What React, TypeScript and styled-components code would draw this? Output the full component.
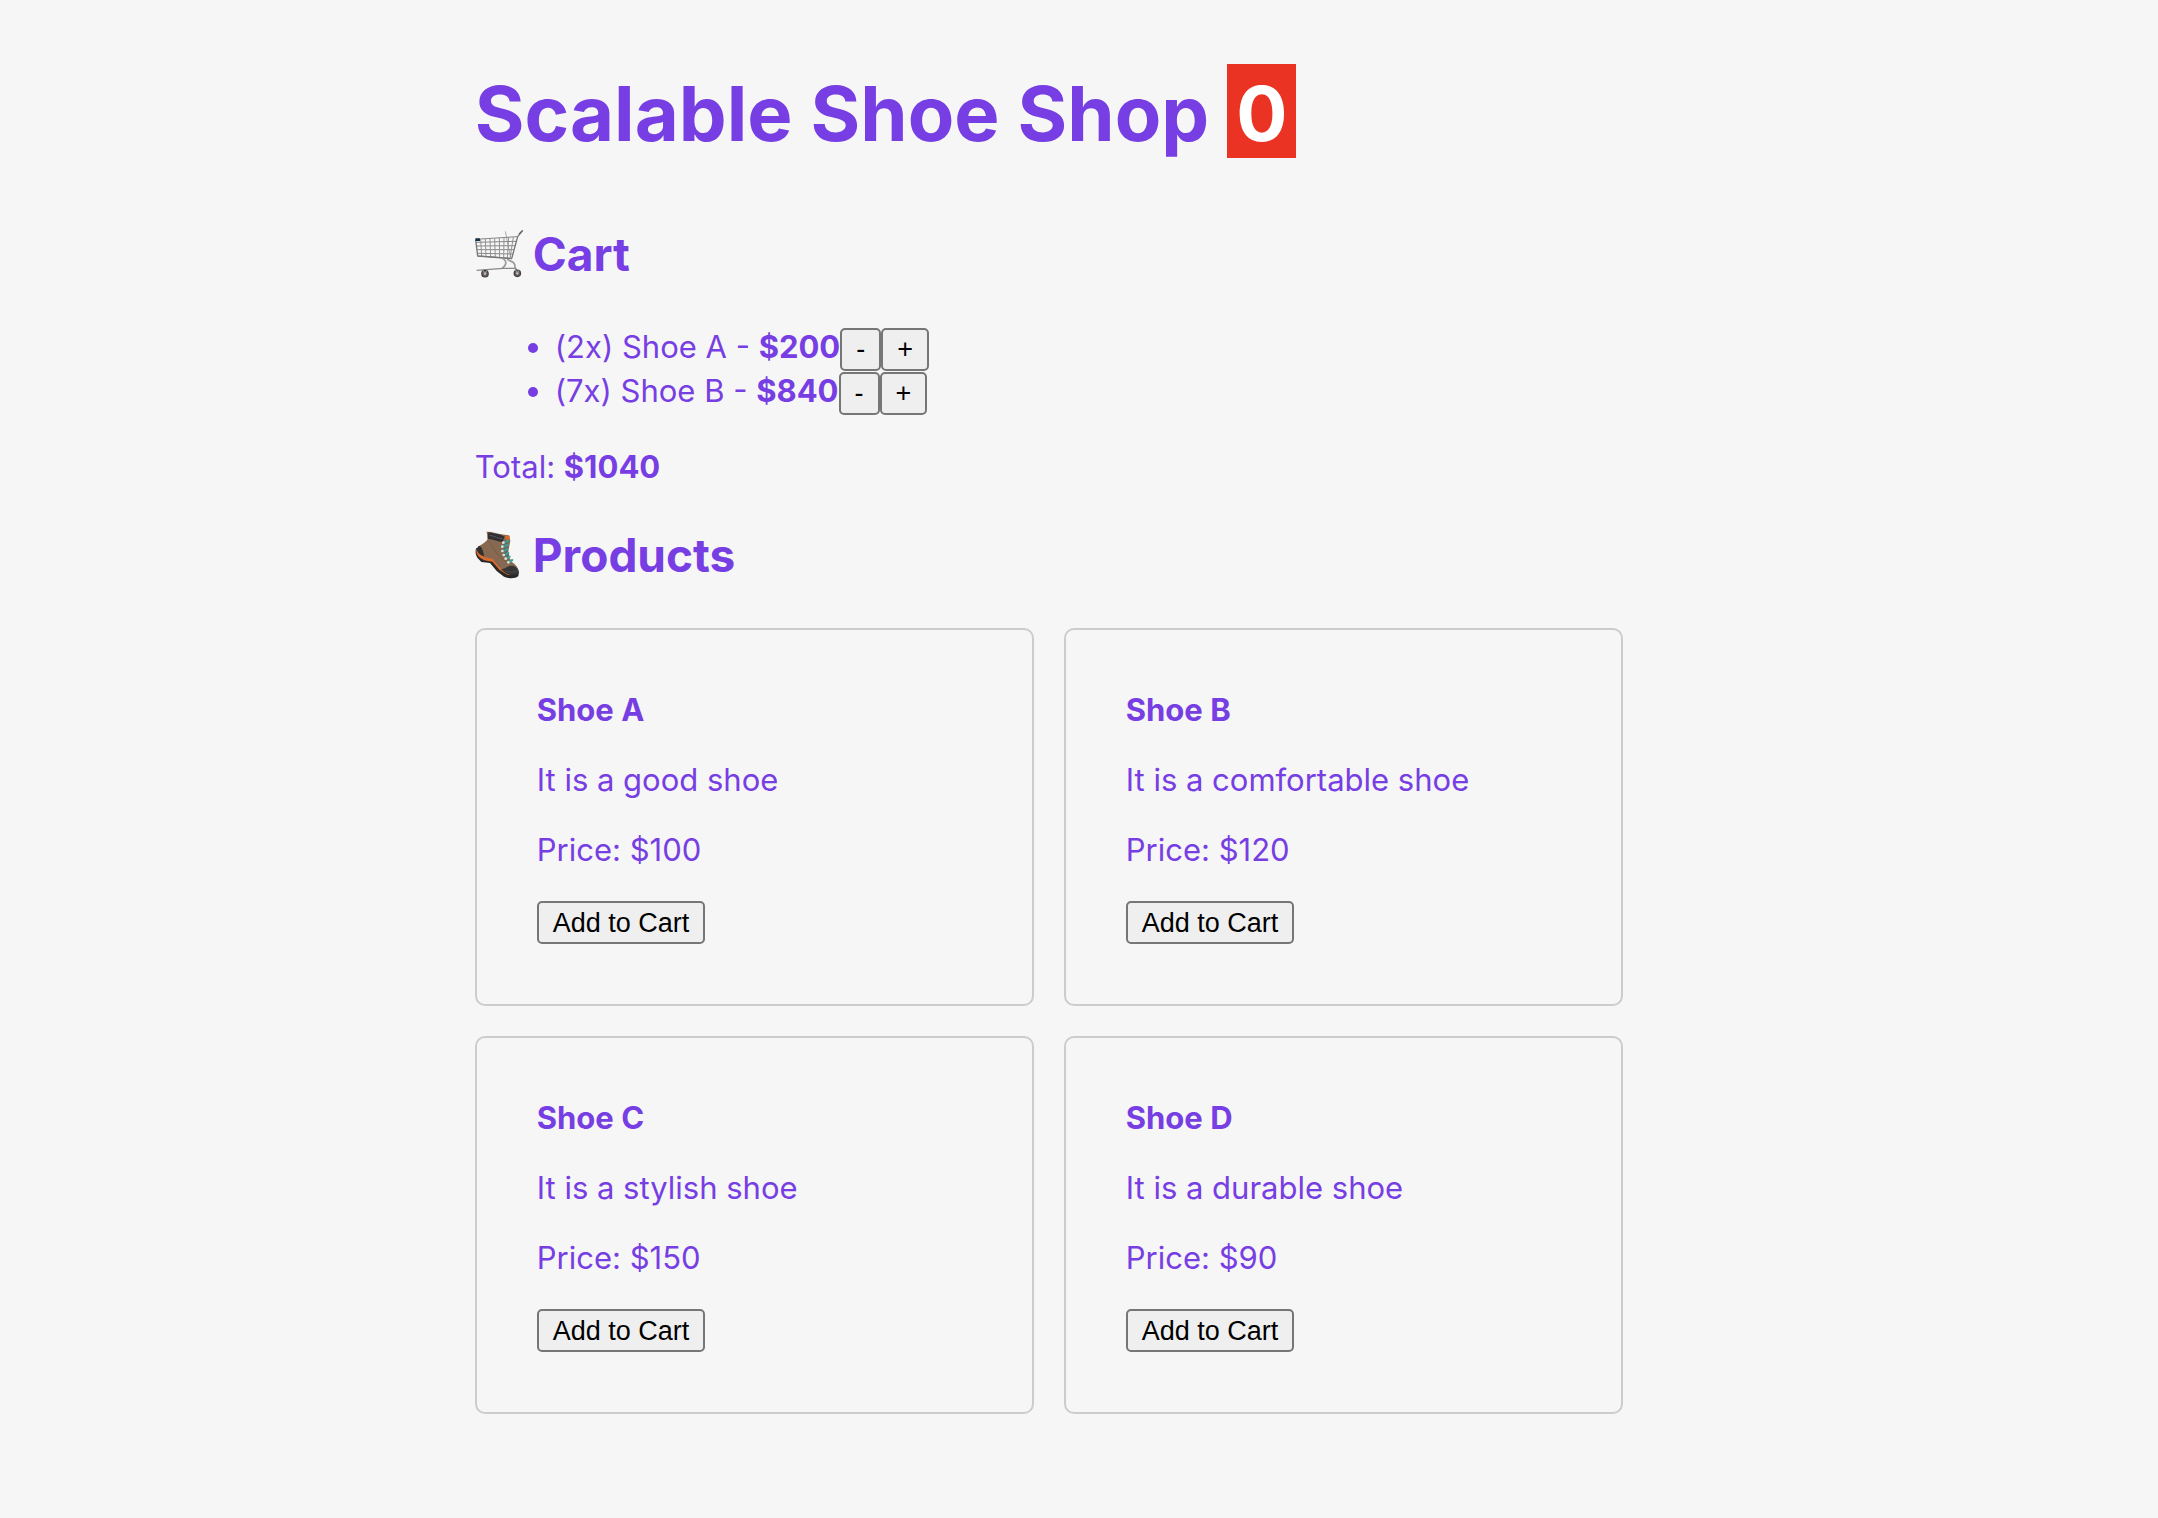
import React, { useState } from "react";
import styled, { createGlobalStyle } from "styled-components";

const GlobalStyle = createGlobalStyle`
  body {
    margin: 0;
    background: #f6f6f6;
    color: #763ee3;
    font-family: Inter, "Open Sans", sans-serif;
    font-size: 31px;
    line-height: 38px;
  }
`;

const Page = styled.main`
  box-sizing: border-box;
  max-width: 1148px;
  margin-left: 22%;
  padding: 64px 0;
`;

const Title = styled.h1`
  margin: 0 0 65px;
  font-size: 76px;
  line-height: 90px;
  font-weight: 700;
`;

const Badge = styled.span`
  display: inline-block;
  padding: 4px 9px 0;
  background: #ea3323;
  color: #fff;
`;

const SectionTitle = styled.h2`
  display: flex;
  align-items: center;
  gap: 10px;
  margin: 38px 0 42px;
  font-size: 46px;
  line-height: 62px;
  font-weight: 700;
`;

const Icon = styled.svg`
  flex: none;
  width: 48px;
  height: 48px;
`;

const CartList = styled.ul`
  margin: 0 0 33px;
  padding-left: 80px;
`;

const CartItem = styled.li`
  height: 44px;
  line-height: 40px;
`;

const Total = styled.p`
  margin: 0;
`;

const Button = styled.button`
  box-sizing: border-box;
  height: 43px;
  padding: 0 14px;
  border: 2px solid #767676;
  border-radius: 5px;
  background: #efefef;
  color: #000;
  font-family: "Liberation Sans", Arial, sans-serif;
  font-size: 27px;
  line-height: 38px;
`;

const Products = styled.div`
  display: grid;
  grid-template-columns: repeat(2, minmax(0, 1fr));
  gap: 30px;
`;

const Card = styled.article`
  display: flex;
  flex-direction: column;
  align-items: flex-start;
  gap: 32px;
  padding: 61px 60px 60px;
  border: 2px solid #ccc;
  border-radius: 10px;
`;

const CardTitle = styled.h3`
  margin: 0;
  font-size: 31px;
  font-weight: 700;
`;

const CardText = styled.p`
  margin: 0;
`;

function CartIcon() {
  return (
    <Icon viewBox="27 18 144 144" aria-hidden="true" fill="none">
      <path d="M118 22 123 45M122 44 134 100" stroke="#aaa" strokeWidth="3" />
      <path d="M30 46 153 38M31 55 150 52M32 66 147 65M33 77 143 77M34 88 140 90M35 96 137 103" stroke="#858585" strokeWidth="3" />
      <path d="M44 46 47 97M58 45 60 98M72 44 74 100M86 43 88 101M100 42 101 102M114 41 113 103M128 40 124 104M142 39 132 104" stroke="#929292" strokeWidth="3" />
      <path d="M29 47 35 96 137 104 155 38 168 22" stroke="#777" strokeWidth="4" strokeLinejoin="round" />
      <path d="M160 29 169 20" stroke="#666" strokeWidth="4" strokeLinecap="round" />
      <path d="M107 102C125 110 122 124 108 133M124 105C130 115 148 108 147 130L150 138" stroke="#999" strokeWidth="5" />
      <path d="M32 139 112 133 150 133M57 137V145M150 134 154 146" stroke="#888" strokeWidth="4" />
      <rect x="28" y="43" width="14" height="8" rx="1" fill="#173342" />
      <circle cx="57" cy="149" r="9.5" fill="#6a6364" stroke="#484243" strokeWidth="4" />
      <circle cx="154" cy="148" r="9.5" fill="#6a6364" stroke="#484243" strokeWidth="4" />
      <circle cx="57" cy="149" r="3.5" fill="#c8c0c0" />
      <circle cx="154" cy="148" r="3.5" fill="#c8c0c0" />
      <path d="M51 139 57 149 63 139M148 137 154 148 159 139" stroke="#aaa" strokeWidth="2.5" />
    </Icon>
  );
}

function BootIcon() {
  return (
    <Icon viewBox="27 33 144 144" aria-hidden="true" fill="none">
      <path d="M31 84C27 92 28 103 34 113L46 126 72 129 92 153 114 170C130 177 149 176 157 168L159 155 148 146 70 120 40 85Z" fill="#2b2927" />
      <path d="M31 88C29 97 34 106 42 113L55 121 79 125 100 149 121 163 134 166 121 155 78 114 44 94Z" fill="#d96a30" />
      <path d="M62 35 65 57C59 69 42 74 35 83 34 97 48 107 58 112L80 117 100 142 122 157C136 163 151 160 157 157 160 148 152 136 138 126L131 115 127 94 133 62 128 46 104 43 76 36Z" fill="#866950" />
      <path d="M66 65C80 68 78 88 100 108M84 90C96 104 108 117 122 128" stroke="#765941" strokeWidth="2" />
      <path d="M38 78C46 77 52 92 54 109 42 105 33 97 32 86Z" fill="#303030" />
      <path d="M67 37 105 44 116 50 110 65C96 66 78 56 65 56Z" fill="#302f31" />
      <path d="M70 46C85 47 97 57 110 56" stroke="#5b575a" strokeWidth="3" />
      <path d="M105 148C117 148 126 136 136 137 146 137 155 143 158 153L157 161C145 167 131 166 118 159Z" fill="#363636" />
      <path d="M117 153C130 158 145 157 156 153" stroke="#555" strokeWidth="2" />
      <path d="M121 46C130 44 134 49 130 57L122 60 116 52Z" fill="#d56b2c" />
      <path d="M115 67 127 63M111 79 125 75M112 92 124 88M115 104 127 99M121 115 131 110M128 126 139 120" stroke="#42a09a" strokeWidth="6" strokeLinecap="round" />
      <path d="M125 65 113 78M124 78 113 91M124 90 117 102M127 101 122 113" stroke="#267e7b" strokeWidth="3" />
      <g fill="#d8e2e1">
        <circle cx="112" cy="68" r="4" />
        <circle cx="109" cy="80" r="4" />
        <circle cx="109" cy="93" r="4" />
        <circle cx="113" cy="105" r="4" />
        <circle cx="119" cy="116" r="4" />
        <circle cx="127" cy="127" r="4" />
      </g>
    </Icon>
  );
}

const products = [
  { name: "Shoe A", description: "It is a good shoe", price: 100 },
  { name: "Shoe B", description: "It is a comfortable shoe", price: 120 },
  { name: "Shoe C", description: "It is a stylish shoe", price: 150 },
  { name: "Shoe D", description: "It is a durable shoe", price: 90 },
];

export default function App() {
  const [quantities, setQuantities] = useState<Record<string, number>>({ "Shoe A": 2, "Shoe B": 7 });

  const change = (name: string, step: number) =>
    setQuantities((current) => ({ ...current, [name]: Math.max(0, (current[name] ?? 0) + step) }));

  const inCart = products.filter((product) => quantities[product.name] > 0);
  const total = inCart.reduce((sum, product) => sum + product.price * quantities[product.name], 0);

  return (
    <>
      <GlobalStyle />
      <Page>
        <Title>
          Scalable Shoe Shop <Badge>0</Badge>
        </Title>
        <section>
          <SectionTitle>
            <CartIcon />
            Cart
          </SectionTitle>
          <CartList>
            {inCart.map(({ name, price }) => (
              <CartItem key={name}>
                ({quantities[name]}x) {name} - <strong>${price * quantities[name]}</strong>
                <Button type="button" onClick={() => change(name, -1)}>-</Button>
                <Button type="button" onClick={() => change(name, 1)}>+</Button>
              </CartItem>
            ))}
          </CartList>
          <Total>
            Total: <strong>${total}</strong>
          </Total>
        </section>
        <section>
          <SectionTitle>
            <BootIcon />
            Products
          </SectionTitle>
          <Products>
            {products.map(({ name, description, price }) => (
              <Card key={name}>
                <CardTitle>{name}</CardTitle>
                <CardText>{description}</CardText>
                <CardText>Price: ${price}</CardText>
                <Button type="button" onClick={() => change(name, 1)}>Add to Cart</Button>
              </Card>
            ))}
          </Products>
        </section>
      </Page>
    </>
  );
}
